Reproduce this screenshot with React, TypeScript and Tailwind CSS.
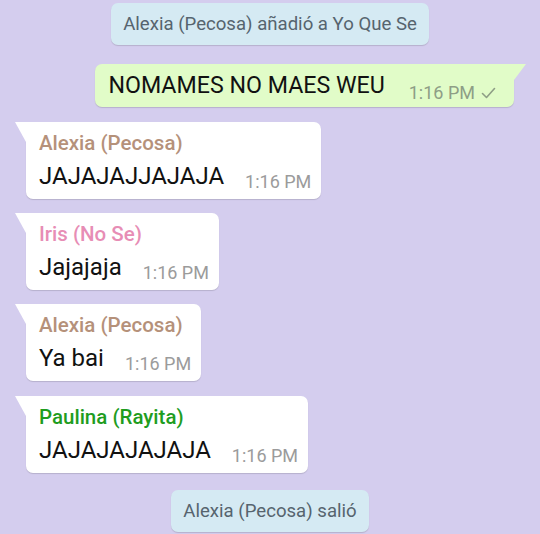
import React from "react";

type Incoming = { name: string; color: string; text: string; mt: string };

const INCOMING: Incoming[] = [
  { name: "Alexia (Pecosa)", color: "text-[#b5917a]", text: "JAJAJAJJAJAJA", mt: "mt-[15px]" },
  { name: "Iris (No Se)", color: "text-[#e78db5]", text: "Jajajaja", mt: "mt-[14px]" },
  { name: "Alexia (Pecosa)", color: "text-[#b5917a]", text: "Ya bai", mt: "mt-[14px]" },
  { name: "Paulina (Rayita)", color: "text-[#1f9d1f]", text: "JAJAJAJAJAJA", mt: "mt-[15px]" },
];

const SystemNote = ({ children, className = "" }: { children: React.ReactNode; className?: string }) => (
  <div className={`self-center rounded-[7px] bg-[#d5eaf3] px-[12px] pt-[10px] pb-[10px] text-[18.6px] leading-[22px] text-[#56646e] shadow-[0_1px_1px_rgba(0,0,0,0.14)] ${className}`}>
    {children}
  </div>
);

const App = () => {
  return (
    <div
      className="flex h-[534px] w-[540px] flex-col overflow-hidden bg-[#d4cdee] pt-[3px]"
      style={{ fontFamily: "Roboto, 'Noto Sans', sans-serif" }}
    >
      <SystemNote>Alexia (Pecosa) añadió a Yo Que Se</SystemNote>

      {/* Mensaje enviado */}
      <div className="relative mt-[19px] mr-[26px] self-end rounded-[7px] rounded-tr-none bg-[#e1fcc8] pl-[13px] pr-[18px] pt-[7px] pb-[8px] shadow-[0_1px_1px_rgba(0,0,0,0.14)]">
        <svg className="absolute top-0 right-[-12px]" width="12" height="16" viewBox="0 0 12 16" aria-hidden>
          <polygon points="0,0 12,0 0,16" fill="#e1fcc8" />
        </svg>
        <div className="flex items-end">
          <span className="text-[23.2px] leading-[28px] text-[#111]">NOMAMES NO MAES WEU</span>
          <span className="ml-[24px] flex items-center gap-[6px] text-[18px] leading-[17px] text-[#8e9e86] translate-y-[2px]">
            1:16 PM
            <svg width="15" height="12" viewBox="0 0 15 12" fill="none" stroke="#8e9e86" strokeWidth={1.6} strokeLinecap="round" strokeLinejoin="round" aria-hidden>
              <polyline points="1.5,6.5 5.5,10.5 13.5,1.5" />
            </svg>
          </span>
        </div>
      </div>

      {INCOMING.map((m, i) => (
        <div
          key={i}
          className={`relative ${m.mt} ml-[26px] self-start rounded-[7px] rounded-tl-none bg-white pl-[13px] pr-[10px] pt-[8px] pb-[9px] shadow-[0_1px_1px_rgba(0,0,0,0.14)]`}
        >
          <svg className="absolute top-0 left-[-11px]" width="11" height="20" viewBox="0 0 11 20" aria-hidden>
            <polygon points="0,0 11,0 11,20" fill="#ffffff" />
          </svg>
          <div className={`text-[20.5px] font-medium leading-[26px] ${m.color}`}>{m.name}</div>
          <div className="mt-[6px] flex items-end">
            <span className="text-[24px] leading-[28px] text-[#111]">{m.text}</span>
            <span className="ml-[21px] text-[18px] leading-[17px] text-[#9b9b9b]">1:16 PM</span>
          </div>
        </div>
      ))}

      <SystemNote className="mt-[17px]">Alexia (Pecosa) salió</SystemNote>
    </div>
  );
};

export default App;
